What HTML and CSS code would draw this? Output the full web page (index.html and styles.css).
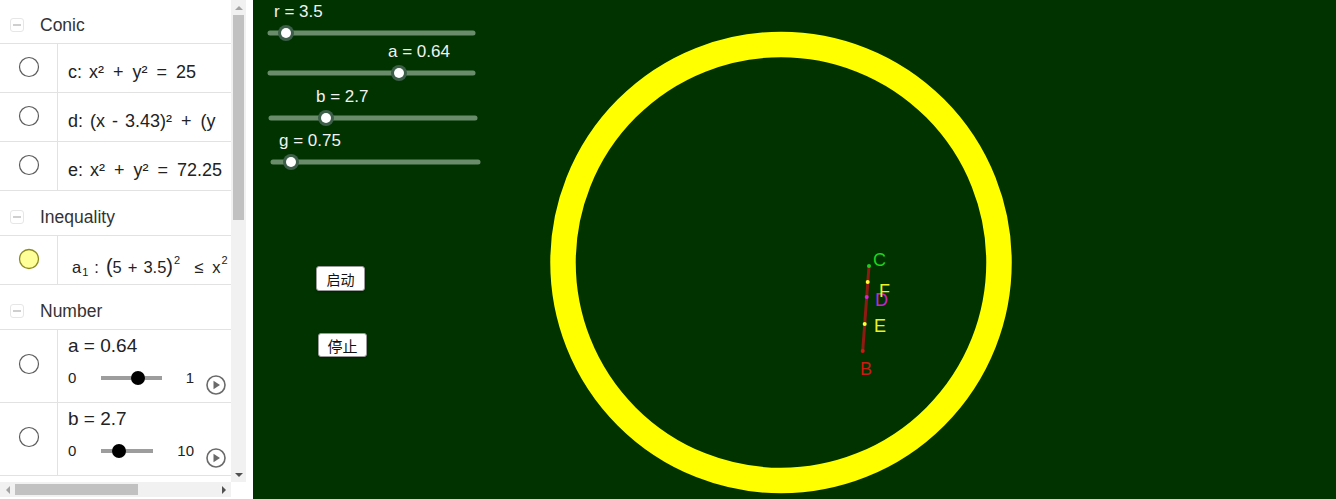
FILE: index.html
```html
<!DOCTYPE html>
<html lang="zh">
<head>
<meta charset="utf-8">
<title>GeoGebra</title>
<link rel="stylesheet" href="styles.css">
</head>
<body>
<div class="app">
  <aside class="sidebar">
    <div class="list">
      <div class="list-inner">
        <div class="group-head"><span class="minus"></span><span class="group-title">Conic</span></div>
        <div class="item">
          <div class="marble"><svg class="radio" width="22" height="22" viewBox="0 0 22 22"><circle cx="11" cy="11" r="9.5"/></svg></div>
          <div class="formula">c: x²<span class="op">+</span>y²<span class="op">=</span>25</div>
        </div>
        <div class="item">
          <div class="marble"><svg class="radio" width="22" height="22" viewBox="0 0 22 22"><circle cx="11" cy="11" r="9.5"/></svg></div>
          <div class="formula">d: (x - 3.43)²<span class="op">+</span>(y</div>
        </div>
        <div class="item">
          <div class="marble"><svg class="radio" width="22" height="22" viewBox="0 0 22 22"><circle cx="11" cy="11" r="9.5"/></svg></div>
          <div class="formula">e: x²<span class="op">+</span>y²<span class="op">=</span>72.25</div>
        </div>
        <div class="group-head"><span class="minus"></span><span class="group-title">Inequality</span></div>
        <div class="item">
          <div class="marble"><svg class="radio filled" width="22" height="22" viewBox="0 0 22 22"><circle cx="11" cy="11" r="9.5"/></svg></div>
          <div class="formula latex">a<sub>1</sub><span class="colon">:</span><span class="paren">(</span>5<span class="op-s">+</span>3.5<span class="paren">)</span><sup>2</sup><span class="op-l">≤</span>x<sup>2</sup></div>
        </div>
        <div class="group-head"><span class="minus"></span><span class="group-title">Number</span></div>
        <div class="item tall">
          <div class="marble"><svg class="radio" width="22" height="22" viewBox="0 0 22 22"><circle cx="11" cy="11" r="9.5"/></svg></div>
          <div class="slider-cell">
            <div class="value">a = 0.64</div>
            <div class="slider-line">
              <span class="min">0</span>
              <div class="track-wrap"><div class="bar"><div class="rail"><span class="knob" style="left:64%"></span></div></div></div>
              <span class="max">1</span>
              <svg class="play" width="20" height="20" viewBox="0 0 20 20"><circle cx="10" cy="10" r="9"/><polygon points="7.5,5.8 14,10 7.5,14.2"/></svg>
            </div>
          </div>
        </div>
        <div class="item tall">
          <div class="marble"><svg class="radio" width="22" height="22" viewBox="0 0 22 22"><circle cx="11" cy="11" r="9.5"/></svg></div>
          <div class="slider-cell">
            <div class="value">b = 2.7</div>
            <div class="slider-line">
              <span class="min">0</span>
              <div class="track-wrap"><div class="bar"><div class="rail"><span class="knob" style="left:27%"></span></div></div></div>
              <span class="max">10</span>
              <svg class="play" width="20" height="20" viewBox="0 0 20 20"><circle cx="10" cy="10" r="9"/><polygon points="7.5,5.8 14,10 7.5,14.2"/></svg>
            </div>
          </div>
        </div>
        <div class="item"></div>
      </div>
    </div>
    <div class="vscroll">
      <div class="arrow"><span class="tri up"></span></div>
      <div class="vtrack"><div class="vthumb"></div></div>
      <div class="arrow"><span class="tri down"></span></div>
    </div>
    <div class="hscroll">
      <div class="arrow h"><span class="tri left"></span></div>
      <div class="htrack"><div class="hthumb"></div></div>
      <div class="arrow h"><span class="tri right"></span></div>
    </div>
    <div class="corner"></div>
  </aside>
  <main class="graphics">
    <svg class="canvas" width="1083" height="499" viewBox="0 0 1083 499">
      <text class="glabel" x="21" y="17">r = 3.5</text>
      <line class="gtrack" x1="17" y1="33" x2="220" y2="33"/>
      <circle class="kring" cx="33" cy="33" r="8"/>
      <circle class="kdot" cx="33" cy="33" r="5"/>

      <text class="glabel" x="135" y="57">a = 0.64</text>
      <line class="gtrack" x1="17" y1="73" x2="220" y2="73"/>
      <circle class="kring" cx="146" cy="73" r="8"/>
      <circle class="kdot" cx="146" cy="73" r="5"/>

      <text class="glabel" x="63" y="102">b = 2.7</text>
      <line class="gtrack" x1="18" y1="118" x2="222" y2="118"/>
      <circle class="kring" cx="73" cy="118" r="8"/>
      <circle class="kdot" cx="73" cy="118" r="5"/>

      <text class="glabel" x="26" y="146">g = 0.75</text>
      <line class="gtrack" x1="20" y1="162" x2="225" y2="162"/>
      <circle class="kring" cx="38" cy="162" r="8"/>
      <circle class="kdot" cx="38" cy="162" r="5"/>

      <circle class="ring" cx="528" cy="262.5" r="218"/>

      <line class="seg" x1="616" y1="266" x2="609.7" y2="351"/>
      <circle class="pt-c" cx="616" cy="266" r="2"/>
      <circle class="pt-y" cx="614.7" cy="282" r="2"/>
      <circle class="pt-d" cx="613.7" cy="297" r="2"/>
      <circle class="pt-y" cx="611.7" cy="324" r="2"/>
      <circle class="pt-b" cx="609.7" cy="351" r="2"/>

      <text class="plabel lc" x="620" y="266">C</text>
      <text class="plabel ld" x="622" y="305.5">D</text>
      <text class="plabel ly" x="626" y="296.5">F</text>
      <text class="plabel ly" x="621" y="332">E</text>
      <text class="plabel lb" x="607" y="375">B</text>
    </svg>
    <button class="gbtn start">启动</button>
    <button class="gbtn stop">停止</button>
  </main>
</div>
</body>
</html>
```

FILE: styles.css
```css
html, body {
  margin: 0;
  padding: 0;
  background: #fff;
  overflow: hidden;
}

.app {
  display: flex;
  width: 1336px;
  height: 499px;
}

/* ---------- algebra sidebar ---------- */
.sidebar {
  width: 253px;
  flex: none;
  display: grid;
  grid-template-columns: 231px 15px;
  grid-template-rows: 482px 15px;
  background: #fff;
  font-family: "Liberation Sans", Arial, sans-serif;
  color: #333;
}

.list {
  overflow: hidden;
  grid-column: 1;
  grid-row: 1;
}

.list-inner {
  margin-top: -1px;
  width: 231px;
}

.group-head {
  height: 45px;
  box-sizing: border-box;
  border-bottom: 1px solid #e2e2e2;
  display: flex;
  align-items: center;
  padding: 8px 0 0 10px;
}

.minus {
  width: 14px;
  height: 14px;
  box-sizing: border-box;
  border: 1px solid #e6e6e6;
  border-radius: 3px;
  display: flex;
  align-items: center;
  justify-content: center;
  margin-right: 16px;
}

.minus::after {
  content: "";
  width: 8px;
  height: 2px;
  background: #cfcfcf;
}

.group-title {
  font-size: 17.5px;
  line-height: 20px;
  color: #333;
}

.item {
  display: flex;
  height: 49px;
  box-sizing: border-box;
  border-bottom: 1px solid #e2e2e2;
}

.item.tall {
  height: 73px;
}

.marble {
  width: 58px;
  flex: none;
  box-sizing: border-box;
  border-right: 1px solid #e2e2e2;
  display: flex;
  justify-content: center;
  align-items: flex-start;
  padding-top: 12px;
}

.tall .marble {
  padding-top: 23px;
}

.radio circle {
  fill: #fff;
  stroke: #5c5c5c;
  stroke-width: 1.2;
}

.radio.filled circle {
  fill: #ffff99;
  stroke: #8c8c1e;
  stroke-width: 1.3;
}

.formula {
  flex: 1;
  min-width: 0;
  padding: 18px 0 0 10px;
  font-size: 18px;
  line-height: 20px;
  word-spacing: 2px;
  white-space: nowrap;
  overflow: hidden;
  color: #222;
}

.op {
  margin: 0 9px;
}

.formula.latex {
  padding: 21px 0 0 14px;
  font-size: 16.5px;
  word-spacing: 0;
}

.latex sub {
  font-size: 11px;
  line-height: 0;
  vertical-align: -3px;
  margin-left: 1px;
}

.latex sup {
  font-size: 11px;
  line-height: 0;
  vertical-align: 9px;
  margin-left: 1px;
}

.colon {
  margin: 0 7px 0 6px;
}

.paren {
  font-size: 20px;
  line-height: 0;
  font-weight: 300;
}

.op-s {
  margin: 0 6px;
}

.op-l {
  margin: 0 9px 0 14px;
}

.slider-cell {
  flex: 1;
  min-width: 0;
  padding: 5px 5px 0 10px;
}

.value {
  font-size: 19px;
  line-height: 22px;
  color: #222;
}

.slider-line {
  display: flex;
  align-items: flex-start;
  margin-top: 11px;
  font-size: 15px;
  line-height: 20px;
  color: #222;
}

.min {
  margin-right: 25px;
}

.track-wrap {
  flex: 1;
  height: 20px;
  display: flex;
  align-items: center;
}

.bar {
  position: relative;
  width: 100%;
  height: 4px;
  background: #9d9d9d;
}

.rail {
  position: absolute;
  left: 7px;
  right: 7px;
  top: 0;
  bottom: 0;
}

.knob {
  position: absolute;
  top: 50%;
  width: 14px;
  height: 14px;
  border-radius: 50%;
  background: #000;
  transform: translate(-50%, -50%);
}

.max {
  margin-left: 24px;
}

.play {
  flex: none;
  margin-left: 12px;
  margin-top: 7px;
}

.play circle {
  fill: #fff;
  stroke: #6a6a6a;
  stroke-width: 1.6;
}

.play polygon {
  fill: #6a6a6a;
}

/* ---------- scrollbars ---------- */
.vscroll {
  grid-column: 2;
  grid-row: 1;
  background: #f1f1f1;
  display: flex;
  flex-direction: column;
}

.arrow {
  height: 15px;
  flex: none;
  display: flex;
  align-items: center;
  justify-content: center;
}

.arrow.h {
  width: 15px;
  height: 15px;
}

.vtrack {
  flex: 1;
}

.vthumb {
  height: 205px;
  margin: 0 2px;
  background: #c1c1c1;
}

.hscroll {
  grid-column: 1;
  grid-row: 2;
  background: #f1f1f1;
  display: flex;
}

.htrack {
  flex: 1;
  padding: 2px 0;
}

.hthumb {
  width: 123px;
  height: 11px;
  background: #c1c1c1;
}

.corner {
  grid-column: 2;
  grid-row: 2;
  background: #fff;
}

.tri {
  width: 0;
  height: 0;
}

.tri.up {
  border-left: 4px solid transparent;
  border-right: 4px solid transparent;
  border-bottom: 4px solid #a3a3a3;
}

.tri.down {
  border-left: 4px solid transparent;
  border-right: 4px solid transparent;
  border-top: 4px solid #505050;
}

.tri.left {
  border-top: 4px solid transparent;
  border-bottom: 4px solid transparent;
  border-right: 4px solid #a3a3a3;
}

.tri.right {
  border-top: 4px solid transparent;
  border-bottom: 4px solid transparent;
  border-left: 4px solid #505050;
}

/* ---------- graphics view ---------- */
.graphics {
  flex: 1;
  position: relative;
  background: #003300;
  overflow: hidden;
}

.canvas {
  display: block;
}

.glabel {
  font-family: "Liberation Sans", Arial, sans-serif;
  font-size: 17px;
  fill: #f2f2f2;
}

.gtrack {
  stroke: #6a8c6a;
  stroke-width: 5;
  stroke-linecap: round;
}

.kring {
  fill: #3d5f49;
}

.kdot {
  fill: #fff;
}

.ring {
  fill: none;
  stroke: #ffff00;
  stroke-width: 25.5;
}

.seg {
  stroke: #8f1a12;
  stroke-width: 3;
}

.pt-c { fill: #22cc22; }
.pt-y { fill: #ffff33; }
.pt-d { fill: #dd22dd; }
.pt-b { fill: #cc1a10; }

.plabel {
  font-family: "Liberation Sans", Arial, sans-serif;
  font-size: 18px;
}

.lc { fill: #1ed21e; }
.ly { fill: #f0f020; }
.ld { fill: #cc22cc; }
.lb { fill: #cc1a12; }

.gbtn {
  position: absolute;
  margin: 0;
  padding: 0;
  background: #fff;
  border: 1px solid #9a9a9a;
  border-radius: 3px;
  box-shadow: 0 1px 2px rgba(0, 0, 0, 0.35);
  font-family: "Noto Sans CJK SC", sans-serif;
  color: #111;
  line-height: 1;
}

.gbtn.start {
  left: 63px;
  top: 266px;
  width: 49px;
  height: 25px;
  font-size: 14px;
}

.gbtn.stop {
  left: 65px;
  top: 333px;
  width: 49px;
  height: 24px;
  font-size: 15px;
}
```
